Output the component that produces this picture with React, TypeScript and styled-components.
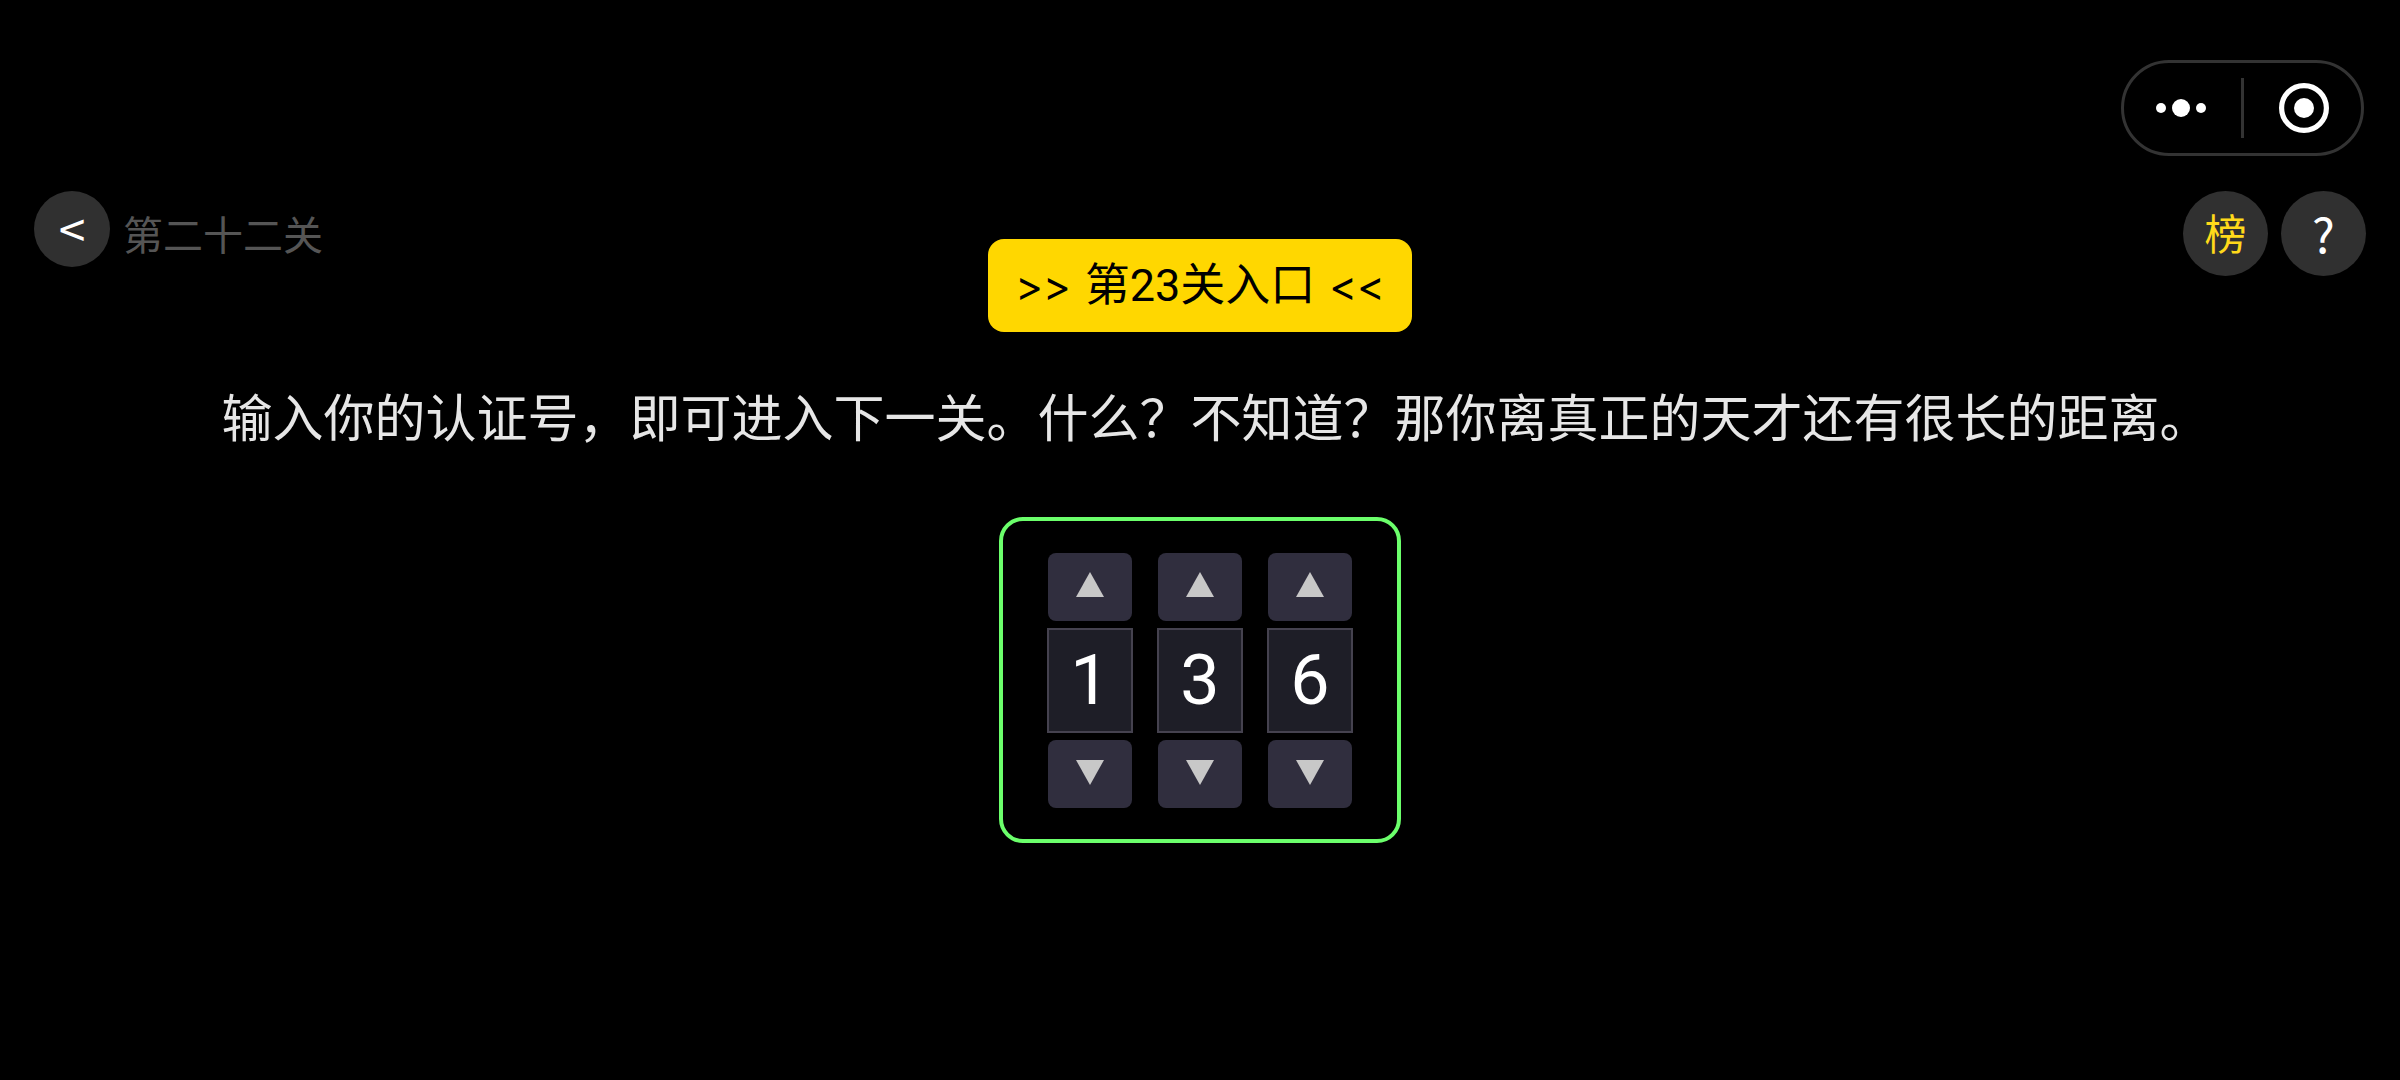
import React, { useState } from "react";
import styled, { createGlobalStyle } from "styled-components";

const GlobalStyle = createGlobalStyle`
  *, *::before, *::after { box-sizing: border-box; }
  body {
    margin: 0;
    background: #000;
    font-family: "Noto Sans CJK SC", sans-serif;
    color: #fff;
  }
  button {
    margin: 0;
    padding: 0;
    border: 0;
    font-family: inherit;
    cursor: pointer;
  }
`;

const Page = styled.div`
  min-height: 100vh;
  padding: 60px 34px 0;
  background: #000;
`;

const StatusRow = styled.header`
  display: flex;
  justify-content: flex-end;
  padding-right: 2px;
`;

const Capsule = styled.div`
  display: flex;
  align-items: center;
  height: 96px;
  border: 3px solid #333;
  border-radius: 48px;
`;

const CapsuleButton = styled.button`
  display: flex;
  align-items: center;
  justify-content: center;
  width: 117px;
  height: 90px;
  background: transparent;
`;

const CapsuleDivider = styled.span`
  width: 3px;
  height: 60px;
  background: #333;
`;

const NavRow = styled.nav`
  display: flex;
  align-items: flex-start;
  justify-content: space-between;
  height: 48px;
  margin-top: 35px;
`;

const NavGroup = styled.div`
  display: flex;
  align-items: center;
  gap: 13px;
`;

const RoundButton = styled.button<{ $size: number; $color?: string; $font?: number }>`
  display: flex;
  align-items: center;
  justify-content: center;
  width: ${(p) => p.$size}px;
  height: ${(p) => p.$size}px;
  padding-bottom: 4px;
  border-radius: 50%;
  background: #303030;
  color: ${(p) => p.$color ?? "#fff"};
  font-size: ${(p) => p.$font ?? 48}px;
  line-height: 48px;
`;

const LevelName = styled.span`
  padding-top: 8px;
  color: #555;
  font-size: 40px;
  line-height: 48px;
`;

const Main = styled.main`
  display: flex;
  flex-direction: column;
  align-items: center;
`;

const NextLevelButton = styled.button`
  display: flex;
  align-items: center;
  gap: 14px;
  height: 93px;
  padding: 0 27px;
  border-radius: 16px;
  background: #ffd700;
  color: #000;
  font-family: Roboto, "Noto Sans CJK SC", sans-serif;
  font-size: 45px;
  line-height: 93px;
`;

const Chevrons = styled.span`
  font-family: Inter, sans-serif;
  font-size: 42px;
`;

const Prompt = styled.p`
  margin: 45px 0 0;
  padding-left: 32px;
  color: #e6e6e6;
  font-size: 51px;
  line-height: 76px;
`;

const Lock = styled.section`
  display: flex;
  gap: 24px;
  margin-top: 64px;
  padding: 32px 44px 31px;
  border: 4px solid #6bff6b;
  border-radius: 24px;
`;

const Dial = styled.div`
  display: flex;
  flex-direction: column;
  gap: 7px;
  width: 86px;
`;

const StepButton = styled.button`
  display: flex;
  justify-content: center;
  height: 68px;
  margin: 0 1px;
  padding-top: 19px;
  border-radius: 8px;
  background: #302e3e;
`;

const Digit = styled.output`
  display: block;
  height: 105px;
  border: 2px solid #45424f;
  background: #1e1e27;
  font-family: Roboto, sans-serif;
  font-size: 70px;
  line-height: 101px;
  text-align: center;
`;

function Triangle({ down }: { down?: boolean }) {
  return (
    <svg width="30" height="26" viewBox="0 0 30 26" aria-hidden="true">
      <path d={down ? "M1 1H29L15 26Z" : "M15 0L29 25H1Z"} fill="#c8c8c8" />
    </svg>
  );
}

export default function App() {
  const [digits, setDigits] = useState([1, 3, 6]);
  const turn = (index: number, step: number) =>
    setDigits((old) => old.map((d, i) => (i === index ? (d + step + 10) % 10 : d)));

  return (
    <>
      <GlobalStyle />
      <Page lang="zh-CN">
        <StatusRow>
          <Capsule>
            <CapsuleButton aria-label="更多">
              <svg width="56" height="20" viewBox="0 0 56 20" fill="#fff">
                <circle cx="6" cy="10" r="5" />
                <circle cx="26" cy="10" r="9" />
                <circle cx="46" cy="10" r="5" />
              </svg>
            </CapsuleButton>
            <CapsuleDivider />
            <CapsuleButton aria-label="关闭">
              <svg width="52" height="50" viewBox="0 0 52 50">
                <circle cx="27" cy="25" r="22.4" fill="none" stroke="#fff" strokeWidth="5.2" />
                <circle cx="27" cy="25" r="10" fill="#fff" />
              </svg>
            </CapsuleButton>
          </Capsule>
        </StatusRow>

        <NavRow>
          <NavGroup>
            <RoundButton $size={76} aria-label="返回">&lt;</RoundButton>
            <LevelName>第二十二关</LevelName>
          </NavGroup>
          <NavGroup>
            <RoundButton $size={85} $color="#ffd91a" $font={42}>榜</RoundButton>
            <RoundButton $size={85}>?</RoundButton>
          </NavGroup>
        </NavRow>

        <Main>
          <NextLevelButton>
            <Chevrons>&gt;&gt;</Chevrons>
            <span>第23关入口</span>
            <Chevrons>&lt;&lt;</Chevrons>
          </NextLevelButton>
          <Prompt>
            输入你的认证号，即可进入下一关。什么？不知道？那你离真正的天才还有很长的距离。
          </Prompt>
          <Lock aria-label="认证号">
            {digits.map((digit, i) => (
              <Dial key={i}>
                <StepButton aria-label="加一" onClick={() => turn(i, 1)}>
                  <Triangle />
                </StepButton>
                <Digit>{digit}</Digit>
                <StepButton aria-label="减一" onClick={() => turn(i, -1)}>
                  <Triangle down />
                </StepButton>
              </Dial>
            ))}
          </Lock>
        </Main>
      </Page>
    </>
  );
}
